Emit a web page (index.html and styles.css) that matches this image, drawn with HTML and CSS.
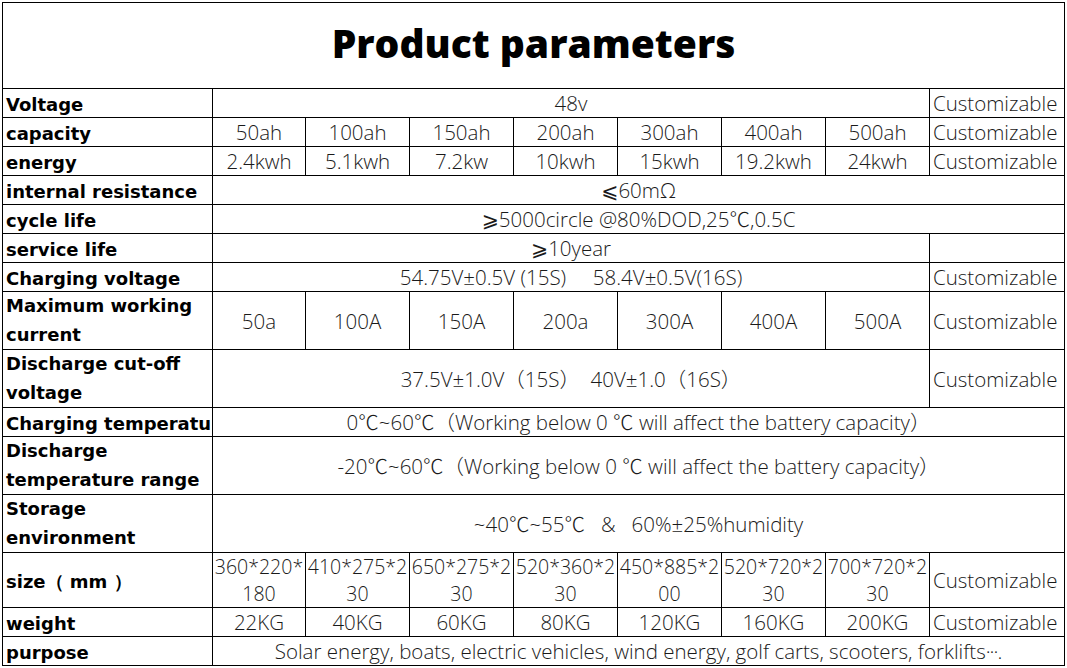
FILE: index.html
```html
<!DOCTYPE html>
<html lang="en">
<head>
<meta charset="utf-8">
<title>Product parameters</title>
<link rel="stylesheet" href="styles.css">
</head>
<body>
<table class="sheet">
  <colgroup>
    <col class="c-label">
    <col class="c-first">
    <col class="c-val"><col class="c-val"><col class="c-val"><col class="c-val"><col class="c-val"><col class="c-val">
    <col class="c-cust">
  </colgroup>
  <tbody>
    <tr><td colspan="9" class="title">Product parameters</td></tr>
    <tr><td class="lbl">Voltage</td><td colspan="7">48v</td><td class="cust">Customizable</td></tr>
    <tr><td class="lbl">capacity</td><td>50ah</td><td>100ah</td><td>150ah</td><td>200ah</td><td>300ah</td><td>400ah</td><td>500ah</td><td class="cust">Customizable</td></tr>
    <tr><td class="lbl">energy</td><td>2.4kwh</td><td>5.1kwh</td><td>7.2kw</td><td>10kwh</td><td>15kwh</td><td>19.2kwh</td><td>24kwh</td><td class="cust">Customizable</td></tr>
    <tr><td class="lbl">internal resistance</td><td colspan="8"><span class="sym">⩽</span>60mΩ</td></tr>
    <tr><td class="lbl">cycle life</td><td colspan="8"><span class="sym">⩾</span>5000circle @80%DOD,25℃,0.5C</td></tr>
    <tr><td class="lbl">service life</td><td colspan="7"><span class="sym">⩾</span>10year</td><td class="cust"></td></tr>
    <tr><td class="lbl">Charging voltage</td><td colspan="7">54.75V±0.5V (15S)&nbsp;&nbsp;&nbsp;&nbsp; 58.4V±0.5V(16S)</td><td class="cust">Customizable</td></tr>
    <tr class="tall"><td class="lbl wrap">Maximum working current</td><td>50a</td><td>100A</td><td>150A</td><td>200a</td><td>300A</td><td>400A</td><td>500A</td><td class="cust">Customizable</td></tr>
    <tr class="tall"><td class="lbl wrap">Discharge cut-off voltage</td><td colspan="7">37.5V±1.0V（15S）&nbsp;&nbsp;40V±1.0（16S）</td><td class="cust">Customizable</td></tr>
    <tr><td class="lbl">Charging temperature</td><td colspan="8">0℃~60℃（Working below 0 ℃ will affect the battery capacity）</td></tr>
    <tr class="tall"><td class="lbl wrap">Discharge temperature range</td><td colspan="8">-20℃~60℃（Working below 0 ℃ will affect the battery capacity）</td></tr>
    <tr class="tall"><td class="lbl wrap">Storage environment</td><td colspan="8">~40℃~55℃&nbsp;&nbsp; &amp;&nbsp;&nbsp; 60%±25%humidity</td></tr>
    <tr class="r-size"><td class="lbl">size（ mm ）</td><td class="two">360*220*<br>180</td><td class="two">410*275*2<br>30</td><td class="two">650*275*2<br>30</td><td class="two">520*360*2<br>30</td><td class="two">450*885*2<br>00</td><td class="two">520*720*2<br>30</td><td class="two">700*720*2<br>30</td><td class="cust">Customizable</td></tr>
    <tr><td class="lbl">weight</td><td>22KG</td><td>40KG</td><td>60KG</td><td>80KG</td><td>120KG</td><td>160KG</td><td>200KG</td><td class="cust">Customizable</td></tr>
    <tr><td class="lbl">purpose</td><td colspan="8">Solar energy, boats, electric vehicles, wind energy, golf carts, scooters, forklifts<span class="dots">···</span>.</td></tr>
  </tbody>
</table>
</body>
</html>
```
FILE: styles.css
```css
html, body {
  margin: 0;
  padding: 0;
  background: #ffffff;
}

.sheet {
  margin: 2px 0 0 2px;
  border-collapse: collapse;
  table-layout: fixed;
  width: 1062px;
}

.c-label { width: 210px; }
.c-first { width: 93px; }
.c-val { width: 104px; }
.c-cust { width: 135px; }

.sheet td {
  border: 1px solid #000;
  padding: 0 2px;
  height: 28px;
  font-family: "Open Sans", "Noto Sans CJK SC", sans-serif;
  font-weight: 300;
  font-size: 20.5px;
  line-height: 28px;
  color: #1a1a1a;
  text-align: center;
  vertical-align: middle;
  white-space: nowrap;
  overflow: hidden;
}

.sheet td.title {
  height: 79px;
  padding-bottom: 6px;
  font-family: "Open Sans", sans-serif;
  font-weight: 800;
  font-size: 39px;
  color: #000;
}

.sheet td.lbl {
  height: 25px;
  padding-top: 3px;
  padding-left: 3px;
  line-height: 25px;
  font-family: "DejaVu Sans", sans-serif;
  font-weight: 700;
  font-size: 18px;
  color: #000;
  text-align: left;
  text-overflow: clip;
}

.tall td {
  height: 57px;
}

.sheet td.wrap {
  height: 57px;
  padding-top: 0;
  white-space: normal;
  line-height: 28.5px;
}

.sheet td.cust {
  text-align: left;
  padding-left: 3px;
}

.sym {
  font-family: "DejaVu Sans", sans-serif;
  font-weight: 400;
  line-height: 18px;
}

.dots {
  letter-spacing: -1px;
}

.r-size td {
  height: 54px;
}

.r-size td.lbl {
  height: 51px;
}

.sheet td.two {
  font-size: 19.5px;
  line-height: 27px;
  vertical-align: bottom;
  padding: 0;
}
```
